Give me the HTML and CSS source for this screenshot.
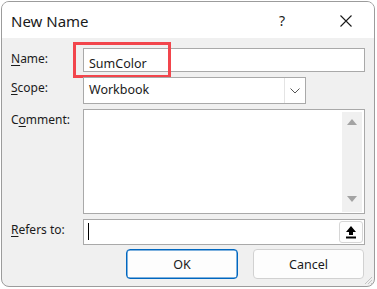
FILE: index.html
```html
<!DOCTYPE html>
<html>
<head>
<meta charset="utf-8">
<link rel="stylesheet" href="styles.css">
</head>
<body>
<div class="window">
  <div class="titlebar">
    <span class="title">New Name</span>
    <span class="help">?</span>
    <span class="close">
      <svg width="12" height="12" viewBox="0 0 12 12"><path d="M0.5 0.5 L11.5 11.5 M11.5 0.5 L0.5 11.5" stroke="#1a1a1a" stroke-width="1.1" fill="none"/></svg>
    </span>
  </div>
  <div class="content">
    <div class="row row-name">
      <div class="label"><u>N</u>ame:</div>
      <div class="field input name-input"><span class="val">SumColor</span></div>
      <div class="highlight"></div>
    </div>
    <div class="row row-scope">
      <div class="label"><u>S</u>cope:</div>
      <div class="field select">
        <span class="val">Workbook</span>
        <span class="drop">
          <svg width="10" height="6" viewBox="0 0 10 6"><path d="M0.5 0.5 L5 5 L9.5 0.5" stroke="#555" stroke-width="1" fill="none"/></svg>
        </span>
      </div>
    </div>
    <div class="row row-comment">
      <div class="label">C<u>o</u>mment:</div>
      <div class="field textarea">
        <div class="scrollbar">
          <svg class="up" width="10" height="6" viewBox="0 0 10 6"><path d="M0 6 L5 0 L10 6 Z" fill="#a3a3a3"/></svg>
          <svg class="down" width="10" height="6" viewBox="0 0 10 6"><path d="M0 0 L5 6 L10 0 Z" fill="#a3a3a3"/></svg>
        </div>
      </div>
    </div>
    <div class="row row-refers">
      <div class="label"><u>R</u>efers to:</div>
      <div class="field input refers">
        <span class="caret"></span>
        <span class="collapse">
          <svg width="12" height="14" viewBox="0 0 12 14"><path d="M6 1 L11 7 L8 7 L8 10 L4 10 L4 7 L1 7 Z" fill="#000"/><rect x="1" y="11.5" width="10" height="2" fill="#000"/></svg>
        </span>
      </div>
    </div>
    <div class="buttons">
      <div class="btn ok">OK</div>
      <div class="btn cancel">Cancel</div>
    </div>
  </div>
  <div class="grip">
    <svg width="10" height="10" viewBox="0 0 10 10"><path d="M9 2 L2 9 M9 5 L5 9 M9 8 L8 9" stroke="#c4c4c4" stroke-width="1"/></svg>
  </div>
</div>
</body>
</html>
```

FILE: styles.css
```css
html, body {
  margin: 0;
  padding: 0;
  background: #ffffff;
}
body {
  font-family: "Noto Sans", "Open Sans", sans-serif;
  color: #1b1b1b;
  padding: 1px 0 0 1px;
}
.window {
  position: relative;
  width: 374px;
  height: 286px;
  border: 1px solid #9c9c9c;
  border-radius: 8px;
  overflow: hidden;
  background: #f0f0f0;
  box-sizing: border-box;
  display: flex;
  flex-direction: column;
}
.titlebar {
  height: 36px;
  background: #ffffff;
  display: flex;
  align-items: center;
  flex-shrink: 0;
}
.title {
  font-size: 15px;
  margin-left: 9px;
  margin-top: 1px;
  color: #1a1a1a;
  flex: 1;
}
.help {
  font-size: 14px;
  width: 14px;
  margin-right: 47px;
  margin-top: 1px;
}
.close {
  display: flex;
  margin-right: 22px;
  margin-top: 1px;
}
.content {
  padding: 10px 9px 0 9px;
  display: flex;
  flex-direction: column;
}
.row {
  position: relative;
  display: flex;
  align-items: flex-start;
}
.label {
  width: 72px;
  flex-shrink: 0;
  font-size: 12px;
  line-height: 16px;
  padding-top: 3px;
}
.label u {
  text-decoration-thickness: 1px;
  text-underline-offset: 2px;
}
.field {
  box-sizing: border-box;
  background: #ffffff;
  border: 1px solid #a9a9a9;
  position: relative;
}
.val {
  font-size: 12.5px;
  line-height: 16px;
  color: #1a1a1a;
}
.name-input {
  width: 283px;
  height: 24px;
  padding: 2px 0 0 5px;
}
.highlight {
  position: absolute;
  left: 62px;
  top: -6px;
  width: 98px;
  height: 36px;
  box-sizing: border-box;
  border: 3px solid #f2454c;
}
.row-scope {
  margin-top: 5px;
}
.select {
  width: 223px;
  height: 27px;
  padding: 4px 0 0 5px;
  display: flex;
}
.select .val {
  flex: 1;
}
.drop {
  position: absolute;
  right: 0;
  top: 0;
  width: 20px;
  height: 25px;
  border-left: 1px solid #e4e4e4;
  display: flex;
  align-items: center;
  justify-content: center;
}
.row-comment {
  margin-top: 5px;
}
.textarea {
  width: 284px;
  height: 105px;
}
.scrollbar {
  position: absolute;
  right: 2px;
  top: 2px;
  bottom: 1px;
  width: 20px;
  background: #f0f0f0;
}
.scrollbar .up {
  position: absolute;
  left: 5px;
  top: 7px;
}
.scrollbar .down {
  position: absolute;
  left: 5px;
  bottom: 10px;
}
.row-refers {
  margin-top: 5px;
}
.refers {
  width: 283px;
  height: 26px;
}
.caret {
  position: absolute;
  left: 4px;
  top: 3px;
  width: 1px;
  height: 17px;
  background: #000;
}
.collapse {
  position: absolute;
  right: 1px;
  top: 1px;
  width: 24px;
  height: 22px;
  box-sizing: border-box;
  border: 1px solid #d6d6d6;
  border-radius: 3px;
  background: #fdfdfd;
  display: flex;
  align-items: center;
  justify-content: center;
}
.buttons {
  display: flex;
  justify-content: flex-end;
  gap: 15px;
  margin-top: 4px;
  padding-right: 1px;
}
.btn {
  box-sizing: border-box;
  height: 30px;
  border-radius: 4px;
  background: #fdfdfd;
  font-size: 12.5px;
  display: flex;
  align-items: center;
  justify-content: center;
  color: #1a1a1a;
}
.ok {
  width: 112px;
  border: 1px solid #0067c0;
  box-shadow: inset 0 0 0 0.5px #0067c0;
}
.cancel {
  width: 111px;
  border: 1px solid #d1d1d1;
}
.grip {
  position: absolute;
  right: 1px;
  bottom: 1px;
  display: flex;
}
```
